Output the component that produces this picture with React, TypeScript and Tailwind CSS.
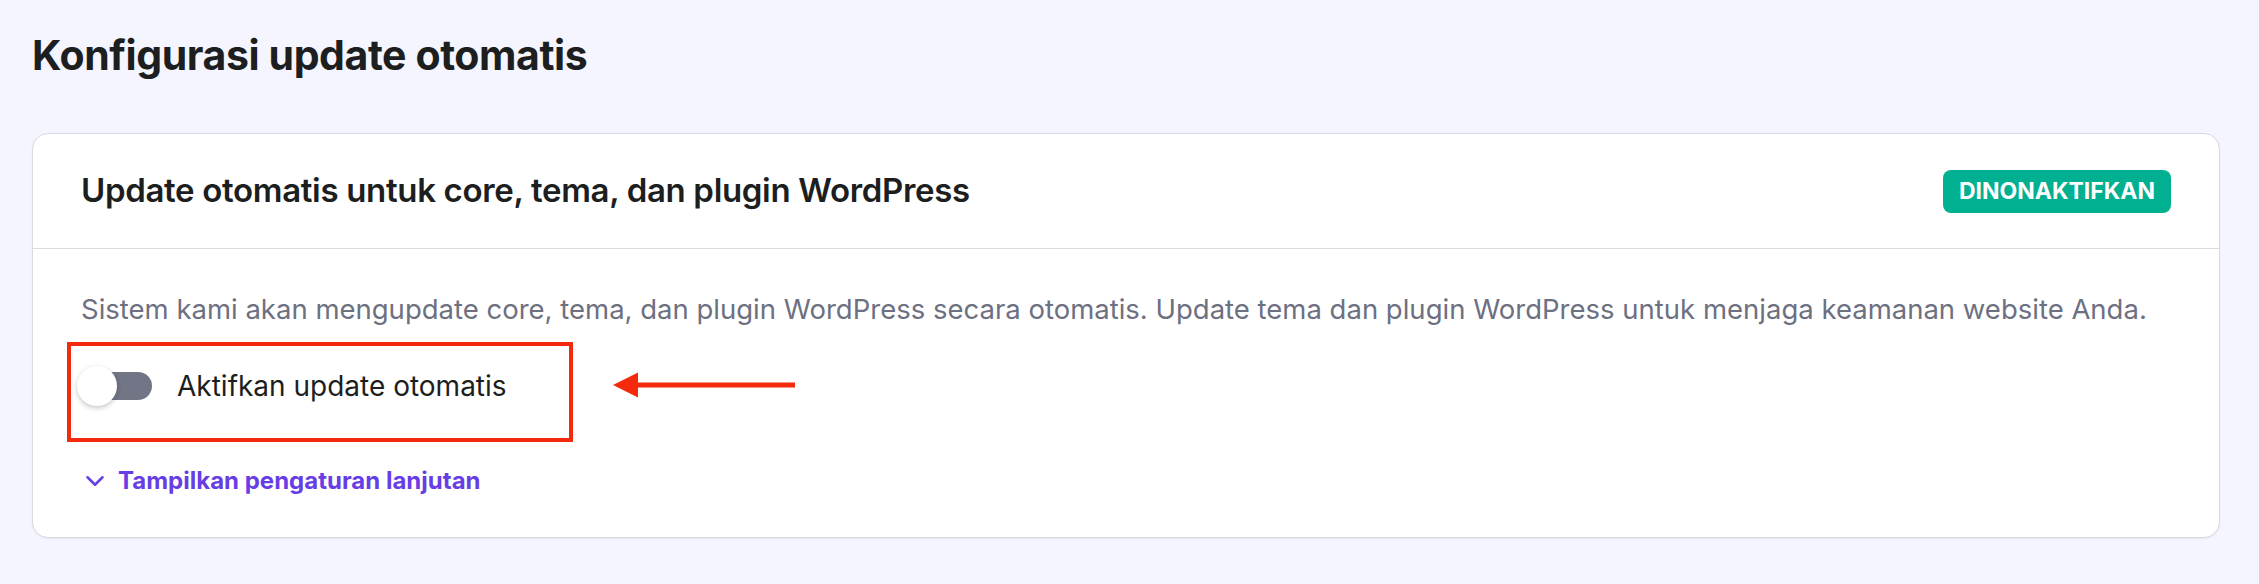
import { ChevronDown } from "lucide-react";

const font = { fontFamily: "Inter, 'Noto Sans', sans-serif" };

function Toggle() {
  return (
    <div className="relative h-[40px] w-[75px] shrink-0">
      <div className="absolute left-[5px] top-[6px] h-[28px] w-[70px] rounded-full bg-[#727586]" />
      <div className="absolute left-0 top-0 h-[40px] w-[40px] rounded-full bg-white shadow-[0_2px_5px_rgba(29,30,32,0.25)]" />
    </div>
  );
}

function Arrow() {
  return (
    <svg width="182" height="26" viewBox="0 0 182 26" className="ml-[40px] mt-[30px] shrink-0">
      <rect x="22" y="10.5" width="160" height="5" fill="#f42a0c" />
      <polygon points="0,13 25,0.5 25,25.5" fill="#f42a0c" />
    </svg>
  );
}

export default function App() {
  return (
    <div className="min-h-[584px] w-[2259px] bg-[#f4f5ff] pl-[32px] pt-[31px]" style={font}>
      <h1 className="text-[41px] leading-[48px] font-bold tracking-[-0.01em] text-[#1d1e20]">
        Konfigurasi update otomatis
      </h1>

      <div className="mt-[54px] w-[2188px] overflow-hidden rounded-[16px] border border-[#d8dae0] bg-white shadow-[0_1px_2px_rgba(29,30,32,0.06)]">
        <div className="flex h-[115px] items-center justify-between border-b border-[#dadce0] px-12">
          <h2 className="text-[33px] font-semibold tracking-[-0.01em] text-[#1d1e20]">
            Update otomatis untuk core, tema, dan plugin WordPress
          </h2>
          <span className="flex h-[43px] items-center rounded-[8px] bg-[#00b090] px-[16px] text-[23px] font-bold uppercase text-white">
            Dinonaktifkan
          </span>
        </div>

        <div className="px-12 pb-[40px] pt-[42px]">
          <p className="text-[27.5px] leading-[36px] text-[#6d7081]">
            Sistem kami akan mengupdate core, tema, dan plugin WordPress secara otomatis. Update tema dan plugin WordPress untuk menjaga keamanan website Anda.
          </p>

          <div className="mt-[15px] flex items-start">
            <div className="-ml-[14px] flex h-[100px] w-[506px] items-start gap-[25px] border-4 border-[#f42a0c] pl-[6px] pt-[20px]">
              <Toggle />
              <span className="text-[28px] leading-[40px] text-[#1d1e20]">Aktifkan update otomatis</span>
            </div>
            <Arrow />
          </div>

          <button className="mt-[23px] flex items-center gap-[8px] text-[24px] leading-[32px] font-bold text-[#673de6]">
            <ChevronDown size={30} strokeWidth={2} className="-ml-[1px]" />
            Tampilkan pengaturan lanjutan
          </button>
        </div>
      </div>
    </div>
  );
}
